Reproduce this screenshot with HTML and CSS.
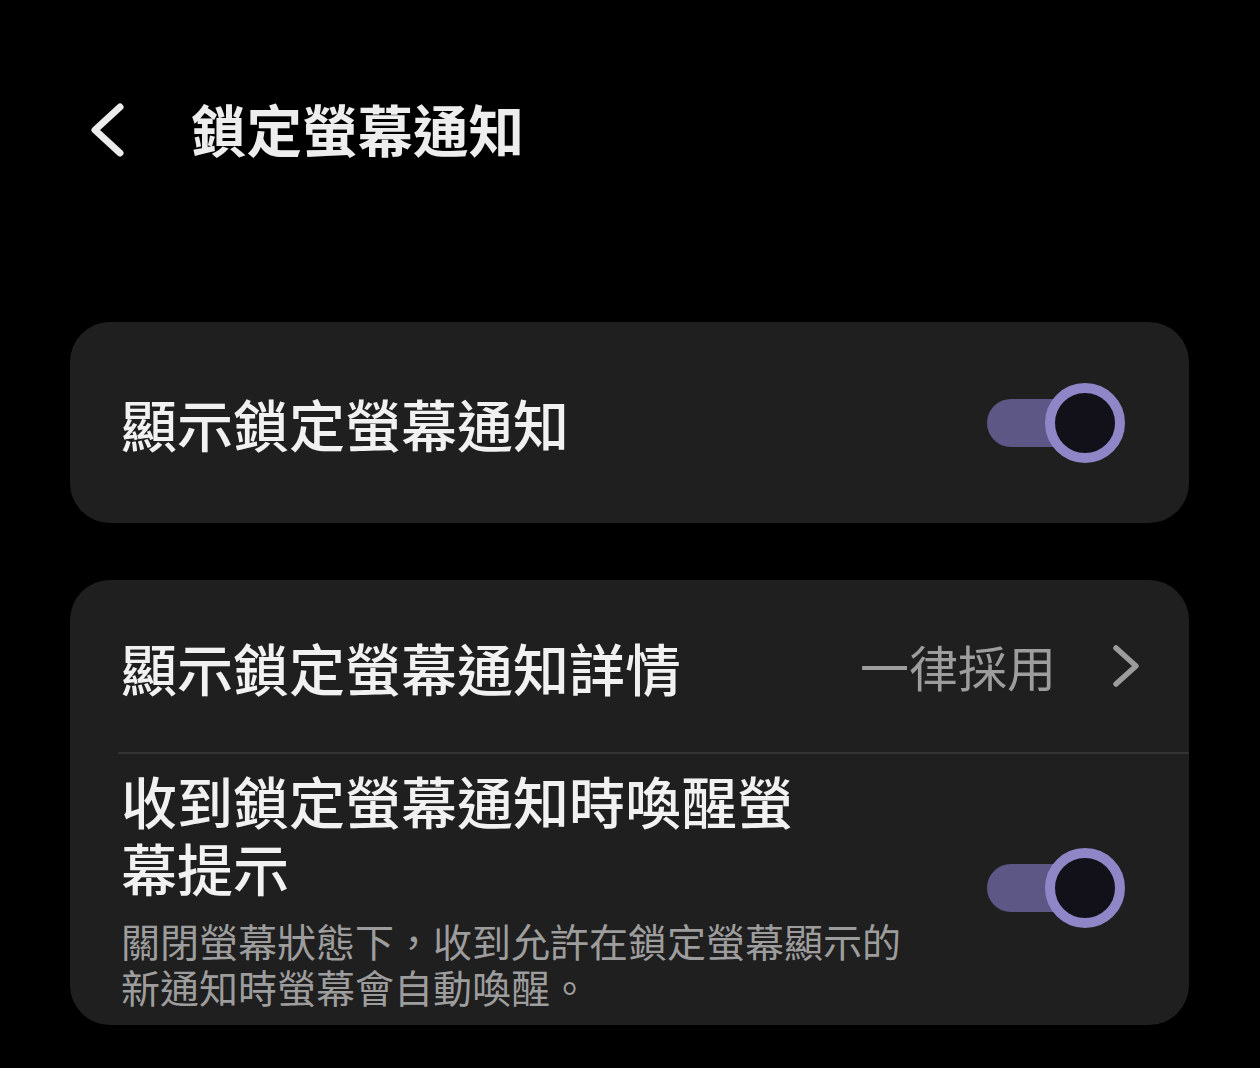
FILE: index.html
```html
<!DOCTYPE html>
<html lang="zh-Hant">
<head>
  <meta charset="UTF-8" />
  <meta name="viewport" content="width=device-width, initial-scale=1.0" />
  <title>鎖定螢幕通知</title>
  <link rel="stylesheet" href="styles.css">
</head>
<body>
  <div class="screen">
    <header class="app-bar">
      <svg class="back" width="40" height="56" viewBox="0 0 40 56">
        <polyline points="32,5 7,28 32,51" fill="none" stroke="#ececec" stroke-width="7" stroke-linecap="round" stroke-linejoin="round"/>
      </svg>
      <h1>鎖定螢幕通知</h1>
    </header>

    <section class="card card-single">
      <div class="row">
        <div class="row-text">
          <div class="row-title">顯示鎖定螢幕通知</div>
        </div>
        <div class="toggle on">
          <span class="track"></span>
          <span class="knob"></span>
        </div>
      </div>
    </section>

    <section class="card">
      <div class="row row-link">
        <div class="row-text">
          <div class="row-title">顯示鎖定螢幕通知詳情</div>
        </div>
        <div class="row-value">一律採用</div>
        <svg class="chevron" width="30" height="44" viewBox="0 0 30 44">
          <polyline points="5,4 25,22 5,40" fill="none" stroke="#9c9c9c" stroke-width="5.5" stroke-linecap="round" stroke-linejoin="round"/>
        </svg>
      </div>
      <div class="divider"></div>
      <div class="row row-tall">
        <div class="row-text">
          <div class="row-title narrow">收到鎖定螢幕通知時喚醒螢幕提示</div>
          <div class="row-sub">關閉螢幕狀態下，收到允許在鎖定螢幕顯示的新通知時螢幕會自動喚醒。</div>
        </div>
        <div class="toggle on">
          <span class="track"></span>
          <span class="knob"></span>
        </div>
      </div>
    </section>
  </div>
</body>
</html>
```

FILE: styles.css
```css
* {
  margin: 0;
  padding: 0;
  box-sizing: border-box;
}

body {
  background: #000;
  color: #f0f0f0;
  font-family: "Noto Sans CJK TC", "Noto Sans", sans-serif;
}

.screen {
  width: 1260px;
  padding: 0 71px 0 70px;
}

.app-bar {
  display: flex;
  align-items: center;
  height: 64px;
  margin-top: 98px;
  margin-bottom: 160px;
  padding-left: 18px;
}

.back {
  display: block;
  flex-shrink: 0;
}

.app-bar h1 {
  margin-left: 63px;
  margin-top: -4px;
  font-size: 55.5px;
  font-weight: 700;
  line-height: 64px;
  color: #ededed;
}

.card {
  background: #1f1f1f;
  border-radius: 40px;
  margin-bottom: 57px;
  overflow: hidden;
}

.card-single .row {
  height: 201px;
}

.row {
  display: flex;
  align-items: center;
  padding: 0 64px 0 51px;
}

.row-text {
  flex: 1;
}

.row-title {
  font-size: 56px;
  font-weight: 500;
  line-height: 67px;
  color: #f1f1f1;
}

.row-title.narrow {
  max-width: 700px;
}

.row-sub {
  max-width: 800px;
  margin-top: 17px;
  font-size: 39px;
  line-height: 46px;
  color: #9d9d9d;
}

.row-link {
  height: 172px;
  padding-right: 48px;
}

.row-value {
  font-size: 49px;
  line-height: 60px;
  color: #9d9d9d;
  margin-right: 55px;
}

.chevron {
  display: block;
}

.divider {
  height: 2px;
  margin-left: 48px;
  background: #333333;
}

.row-tall {
  padding-top: 12px;
  padding-bottom: 16px;
}

.toggle {
  position: relative;
  width: 138px;
  height: 80px;
  flex-shrink: 0;
}

.track {
  position: absolute;
  left: 0;
  top: 16px;
  width: 100px;
  height: 48px;
  border-radius: 24px;
  background: #5d5785;
}

.knob {
  position: absolute;
  right: 0;
  top: 0;
  width: 80px;
  height: 80px;
  border-radius: 50%;
  border: 10px solid #8e86c6;
  background: #121019;
}
```
